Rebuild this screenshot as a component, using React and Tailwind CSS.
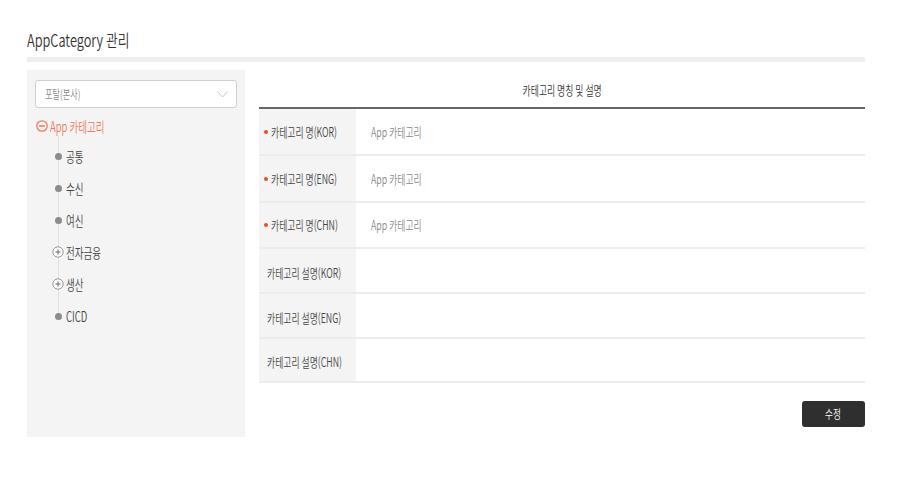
import React from "react";

const T = ({ children, className = "" }) => (
  <span className={"inline-block whitespace-nowrap " + className}>{children}</span>
);

const MinusCircle = () => (
  <svg width="12" height="12" viewBox="0 0 12 12" className="shrink-0">
    <circle cx="6" cy="6" r="5.2" fill="none" stroke="#f2775a" strokeWidth="1.3" />
    <line x1="3.2" y1="6" x2="8.8" y2="6" stroke="#f2775a" strokeWidth="1.6" />
  </svg>
);

const PlusCircle = () => (
  <svg width="12" height="12" viewBox="0 0 12 12" className="shrink-0">
    <circle cx="6" cy="6" r="5.2" fill="#fafafa" stroke="#9a9a9a" strokeWidth="1" />
    <line x1="3.5" y1="6" x2="8.5" y2="6" stroke="#777" strokeWidth="1.1" />
    <line x1="6" y1="3.5" x2="6" y2="8.5" stroke="#777" strokeWidth="1.1" />
  </svg>
);

const Dot = () => (
  <span className="w-[12px] h-[12px] flex items-center justify-center shrink-0">
    <span className="w-[7px] h-[7px] rounded-full bg-[#8c8c8c]" />
  </span>
);

const treeItems = [
  { label: "공통", plus: false },
  { label: "수신", plus: false },
  { label: "여신", plus: false },
  { label: "전자금융", plus: true },
  { label: "생산", plus: true },
  { label: "CICD", plus: false },
];

const rows = [
  { label: "카테고리 명(KOR)", value: "App 카테고리", req: true, h: "h-[45px]" },
  { label: "카테고리 명(ENG)", value: "App 카테고리", req: true, h: "h-[45px]" },
  { label: "카테고리 명(CHN)", value: "App 카테고리", req: true, h: "h-[44px]" },
  { label: "카테고리 설명(KOR)", value: "", req: false, h: "h-[43px]" },
  { label: "카테고리 설명(ENG)", value: "", req: false, h: "h-[43px]" },
  { label: "카테고리 설명(CHN)", value: "", req: false, h: "h-[42px]" },
];

export default function App() {
  return (
    <div
      className="w-[900px] h-[480px] bg-white text-[#333] overflow-hidden font-[350]"
      style={{ fontFamily: '"Noto Sans CJK KR", "Noto Sans", sans-serif' }}
    >
      <div className="pl-[27px] pt-[28px] w-[865px]">
        <div className="h-[24px] flex items-center text-[17px] leading-[24px] text-[#333]">
          <T className="origin-left scale-x-[0.75]">AppCategory 관리</T>
        </div>
        <div className="mt-[5px] h-[5px] bg-[#efefef]" />
        <div className="mt-[8px] flex gap-[14px]">
          {/* Left panel */}
          <div className="w-[218px] h-[367px] bg-[#f4f4f4] px-[8px] pt-[10px]">
            <div className="h-[28px] bg-white border border-[#cfcfcf] rounded-[3px] flex items-center justify-between pl-[9px] pr-[8px]">
              <T className="origin-left scale-x-[0.68] text-[12px] text-[#8a8a8a]">포탈(본사)</T>
              <svg width="11" height="7" viewBox="0 0 11 7">
                <polyline points="0.5,0.5 5.5,6 10.5,0.5" fill="none" stroke="#c4c4c4" strokeWidth="1" />
              </svg>
            </div>
            <div className="mt-[7px] h-[22px] flex items-center gap-[2px] pl-[1px]">
              <MinusCircle />
              <T className="origin-left scale-x-[0.68] text-[14px] text-[#f2775a]">App 카테고리</T>
            </div>
            <div className="relative mt-[3px]">
              <div className="absolute left-[23px] top-[-4px] bottom-[14px] w-px bg-[#e2e2e2]" />
              {treeItems.map((it) => (
                <div key={it.label} className="relative h-[32px] flex items-center gap-[2px] pl-[17px]">
                  {it.plus ? <PlusCircle /> : <Dot />}
                  <T className="origin-left scale-x-[0.68] text-[14px] text-[#444]">{it.label}</T>
                </div>
              ))}
            </div>
          </div>

          {/* Right */}
          <div className="flex-1">
            <div className="h-[35px] pt-[2px] flex items-center justify-center border-b-2 border-[#666] box-content">
              <T className="origin-center scale-x-[0.68] text-[13px] text-[#333]">카테고리 명칭 및 설명</T>
            </div>
            {rows.map((r) => (
              <div key={r.label} className={"flex border-b-2 border-[#ececec] box-content " + r.h}>
                <div className="w-[97px] bg-[#f4f4f4] flex items-center">
                  {r.req ? (
                    <div className="flex items-center pl-[5px] gap-[3px]">
                      <span className="w-[4px] h-[4px] rounded-full bg-[#ee4a1c]" />
                      <T className="origin-left scale-x-[0.68] text-[13px] text-[#444]">{r.label}</T>
                    </div>
                  ) : (
                    <div className="pl-[8px]">
                      <T className="origin-left scale-x-[0.68] text-[13px] text-[#444]">{r.label}</T>
                    </div>
                  )}
                </div>
                <div className="flex-1 flex items-center pl-[15px]">
                  {r.value && <T className="origin-left scale-x-[0.68] text-[13px] text-[#8a8a8a]">{r.value}</T>}
                </div>
              </div>
            ))}
            <div className="mt-[18px] flex justify-end">
              <button className="w-[63px] h-[26px] bg-[#2f2f2f] rounded-[3px] flex items-center justify-center text-white text-[12px]">
                <T className="origin-center scale-x-[0.72]">수정</T>
              </button>
            </div>
          </div>
        </div>
      </div>
    </div>
  );
}
